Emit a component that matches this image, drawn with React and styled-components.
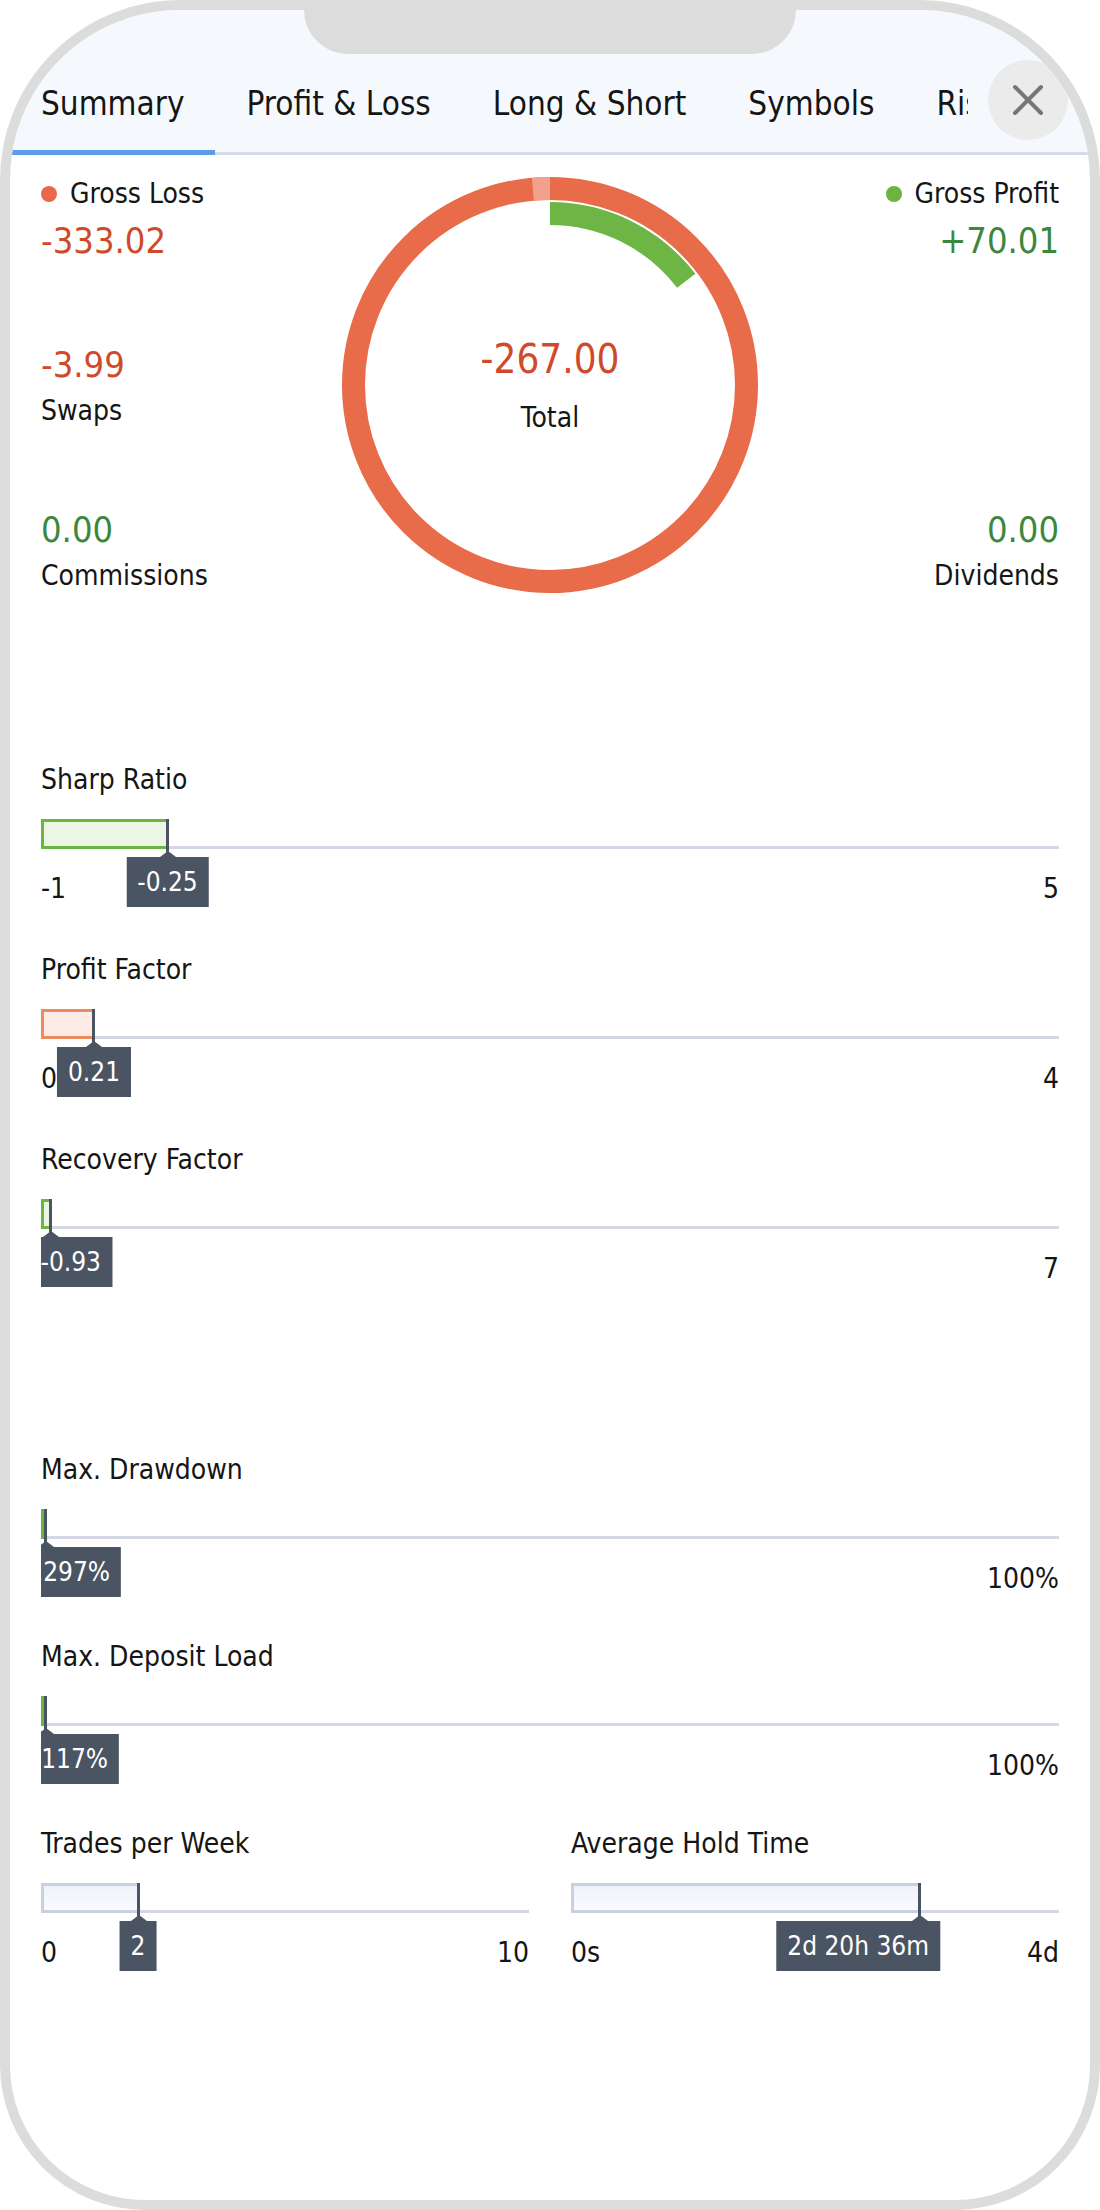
import React from 'react';
import styled, { createGlobalStyle } from 'styled-components';

const Global = createGlobalStyle`
  html, body { margin: 0; padding: 0; background: #fff; }
  body {
    font-family: "DejaVu Sans Condensed", "DejaVu Sans", sans-serif;
    font-stretch: condensed;
    color: #151515;
  }
  * { box-sizing: border-box; }
`;

const C = {
  frame: '#dcdcdc',
  red: '#cf4a2b',
  green: '#3d873d',
  ring: '#e86b4a',
  ringLight: '#f2a28c',
  ringGreen: '#6db544',
  track: '#d4d8e6',
  tip: '#4a5462',
};

const Phone = styled.div`
  position: relative;
  width: 1100px;
  height: 2210px;
  border: 10px solid ${C.frame};
  border-radius: 180px 180px 145px 145px;
  overflow: hidden;
  background: #fff;
`;

const Notch = styled.div`
  position: absolute;
  top: 0;
  left: 294px;
  width: 492px;
  height: 44px;
  background: ${C.frame};
  border-radius: 0 0 44px 44px;
  z-index: 5;
`;

const TabBar = styled.div`
  display: flex;
  align-items: flex-end;
  height: 145px;
  background: #f5f9fd;
  border-bottom: 3px solid #d5dae7;
`;

const TabList = styled.div`
  flex: 1;
  min-width: 0;
  display: flex;
  align-items: flex-end;
  overflow: hidden;
  margin-bottom: -3px;
`;

const Tab = styled.div`
  flex: none;
  padding: 0 31px 27px;
  font-size: 33px;
  line-height: 38px;
  white-space: nowrap;
  color: #151515;
  border-bottom: 5px solid ${p => (p.$active ? '#5b9de6' : 'transparent')};
`;

const CloseButton = styled.div`
  flex: none;
  width: 80px;
  height: 80px;
  margin: 0 22px 12px 20px;
  border-radius: 50%;
  background: #ebebeb;
  display: flex;
  align-items: center;
  justify-content: center;
`;

const Summary = styled.section`
  display: grid;
  grid-template-columns: 1fr 416px 1fr;
  padding: 22px 31px 0;
`;

const SideColumn = styled.div`
  display: flex;
  flex-direction: column;
  justify-content: space-between;
  align-items: ${p => (p.$right ? 'flex-end' : 'flex-start')};
  text-align: ${p => (p.$right ? 'right' : 'left')};
`;

const Stat = styled.div`
  display: flex;
  flex-direction: column;
  align-items: inherit;
  gap: 8px;
`;

const StatLabel = styled.div`
  display: flex;
  align-items: center;
  gap: 13px;
  font-size: 28px;
  line-height: 34px;
  white-space: nowrap;
`;

const Dot = styled.span`
  width: 16px;
  height: 16px;
  border-radius: 50%;
  background: ${p => p.$color};
`;

const StatValue = styled.div`
  font-size: 36px;
  line-height: 43px;
  color: ${p => p.$color};
  white-space: nowrap;
`;

const RingBox = styled.div`
  position: relative;
  width: 416px;
  height: 416px;
`;

const RingCenter = styled.div`
  position: absolute;
  inset: 0;
  display: flex;
  flex-direction: column;
  align-items: center;
  justify-content: center;
  gap: 18px;
`;

const TotalValue = styled.div`
  font-size: 40px;
  line-height: 48px;
  color: ${C.red};
`;

const TotalLabel = styled.div`
  font-size: 28px;
  line-height: 34px;
`;

const Meters = styled.section`
  display: flex;
  flex-direction: column;
  padding: 0 31px;
  margin-top: 170px;
`;

const Group = styled.div`
  display: flex;
  flex-direction: column;
  gap: ${p => p.$gap || 45}px;
  margin-top: ${p => p.$lead || 0}px;
`;

const Pair = styled.div`
  display: grid;
  grid-template-columns: 1fr 1fr;
  column-gap: 42px;
  margin-top: ${p => p.$lead || 0}px;
`;

const MeterTitle = styled.div`
  font-size: 28px;
  line-height: 34px;
  margin-bottom: 22px;
  white-space: nowrap;
`;

const MeterBody = styled.div`
  position: relative;
  overflow: hidden;
  padding-bottom: 2px;
`;

const BarArea = styled.div`
  position: relative;
  display: flex;
  height: 30px;
  &::after {
    content: '';
    position: absolute;
    left: 0;
    right: 0;
    bottom: 0;
    height: 3px;
    background: ${C.track};
  }
`;

const fills = {
  green: { border: '#6cb544', bg: '#ebf7e4' },
  orange: { border: '#ec8b5e', bg: '#fdebe8' },
  neutral: { border: '#c9d0e1', bg: 'linear-gradient(180deg, #eef2fb 0%, #fafbff 100%)' },
};

const Fill = styled.div`
  position: relative;
  z-index: 1;
  flex: none;
  height: 30px;
  border: 3px solid ${p => fills[p.$kind].border};
  border-right-width: 0;
  background: ${p => fills[p.$kind].bg};
  &::after {
    content: '';
    position: absolute;
    top: -3px;
    right: -3px;
    width: 3px;
    bottom: -7px;
    background: ${C.tip};
  }
`;

const Arrow = styled.div`
  position: absolute;
  z-index: 2;
  top: 32px;
  width: 0;
  height: 0;
  transform: translateX(-50%);
  border-left: 8px solid transparent;
  border-right: 8px solid transparent;
  border-bottom: 6px solid ${C.tip};
`;

const Tooltip = styled.div`
  position: absolute;
  z-index: 2;
  top: 38px;
  height: 50px;
  padding: 0 11px;
  background: ${C.tip};
  color: #fff;
  font-size: 26px;
  line-height: 50px;
  white-space: nowrap;
  transform: translateX(${p => (p.$align === 'end' ? '-100%' : '-50%')});
`;

const Scale = styled.div`
  display: flex;
  justify-content: space-between;
  margin-top: 23px;
  font-size: 28px;
  line-height: 34px;
`;

const CloseIcon = () => (
  <svg width="34" height="34" viewBox="0 0 34 34">
    <path d="M4 4 L30 30 M30 4 L4 30" stroke="#777" strokeWidth="4" strokeLinecap="round" fill="none" />
  </svg>
);

const CX = 208;
const pt = (r, deg) => {
  const a = (deg * Math.PI) / 180;
  return [CX + r * Math.sin(a), CX - r * Math.cos(a)];
};
const arc = (r, from, to) => {
  const [x1, y1] = pt(r, from);
  const [x2, y2] = pt(r, to);
  const large = to - from > 180 ? 1 : 0;
  return `M ${x1.toFixed(2)} ${y1.toFixed(2)} A ${r} ${r} 0 ${large} 1 ${x2.toFixed(2)} ${y2.toFixed(2)}`;
};

const Ring = () => (
  <svg width="416" height="416" viewBox="0 0 416 416">
    <circle cx={CX} cy={CX} r="196.5" fill="none" stroke={C.ring} strokeWidth="23" />
    <path d={arc(196.5, -5, 0)} fill="none" stroke={C.ringLight} strokeWidth="23" />
    <path d={arc(171.5, 0, 52.6)} fill="none" stroke={C.ringGreen} strokeWidth="23" />
  </svg>
);

const Meter = ({ title, kind, pos, fill, tip, tipX, align, min, max }) => (
  <div>
    <MeterTitle>{title}</MeterTitle>
    <MeterBody>
      <BarArea>
        <Fill $kind={kind} style={{ width: `${fill}px` }} />
      </BarArea>
      <Arrow style={{ left: `${pos}px` }} />
      <Tooltip $align={align} style={{ left: `${tipX}px` }}>{tip}</Tooltip>
      <Scale>
        <span>{min}</span>
        <span>{max}</span>
      </Scale>
    </MeterBody>
  </div>
);

const tabs = ['Summary', 'Profit & Loss', 'Long & Short', 'Symbols', 'Risks'];

export default function App() {
  return (
    <>
      <Global />
      <Phone>
        <Notch />
        <TabBar>
          <TabList>
            {tabs.map((t, i) => (
              <Tab key={t} $active={i === 0}>{t}</Tab>
            ))}
          </TabList>
          <CloseButton>
            <CloseIcon />
          </CloseButton>
        </TabBar>

        <Summary>
          <SideColumn>
            <Stat>
              <StatLabel><Dot $color="#e8694a" />Gross Loss</StatLabel>
              <StatValue $color={C.red}>-333.02</StatValue>
            </Stat>
            <Stat>
              <StatValue $color={C.red}>-3.99</StatValue>
              <StatLabel>Swaps</StatLabel>
            </Stat>
            <Stat>
              <StatValue $color={C.green}>0.00</StatValue>
              <StatLabel>Commissions</StatLabel>
            </Stat>
          </SideColumn>
          <RingBox>
            <Ring />
            <RingCenter>
              <TotalValue>-267.00</TotalValue>
              <TotalLabel>Total</TotalLabel>
            </RingCenter>
          </RingBox>
          <SideColumn $right>
            <Stat>
              <StatLabel><Dot $color="#6db33f" />Gross Profit</StatLabel>
              <StatValue $color={C.green}>+70.01</StatValue>
            </Stat>
            <Stat>
              <StatValue $color={C.green}>0.00</StatValue>
              <StatLabel>Dividends</StatLabel>
            </Stat>
          </SideColumn>
        </Summary>

        <Meters>
          <Group>
            <Meter title="Sharp Ratio" kind="green" fill={125} pos={126.5} tip="-0.25" tipX={126.5} align="center" min="-1" max="5" />
            <Meter title="Profit Factor" kind="orange" fill={51} pos={52.5} tip="0.21" tipX={53} align="center" min="0" max="4" />
            <Meter title="Recovery Factor" kind="green" fill={8} pos={9.5} tip="-0.93" tipX={71} align="end" min="" max="7" />
          </Group>
          <Group $lead={165} $gap={42}>
            <Meter title="Max. Drawdown" kind="green" fill={3} pos={4.5} tip="0.297%" tipX={80} align="end" min="" max="100%" />
            <Meter title="Max. Deposit Load" kind="green" fill={3} pos={4.5} tip="0.117%" tipX={78} align="end" min="" max="100%" />
          </Group>
          <Pair $lead={42}>
            <Meter title="Trades per Week" kind="neutral" fill={96} pos={97.5} tip="2" tipX={97} align="center" min="0" max="10" />
            <Meter title="Average Hold Time" kind="neutral" fill={347} pos={348.5} tip="2d 20h 36m" tipX={369} align="end" min="0s" max="4d" />
          </Pair>
        </Meters>
      </Phone>
    </>
  );
}
